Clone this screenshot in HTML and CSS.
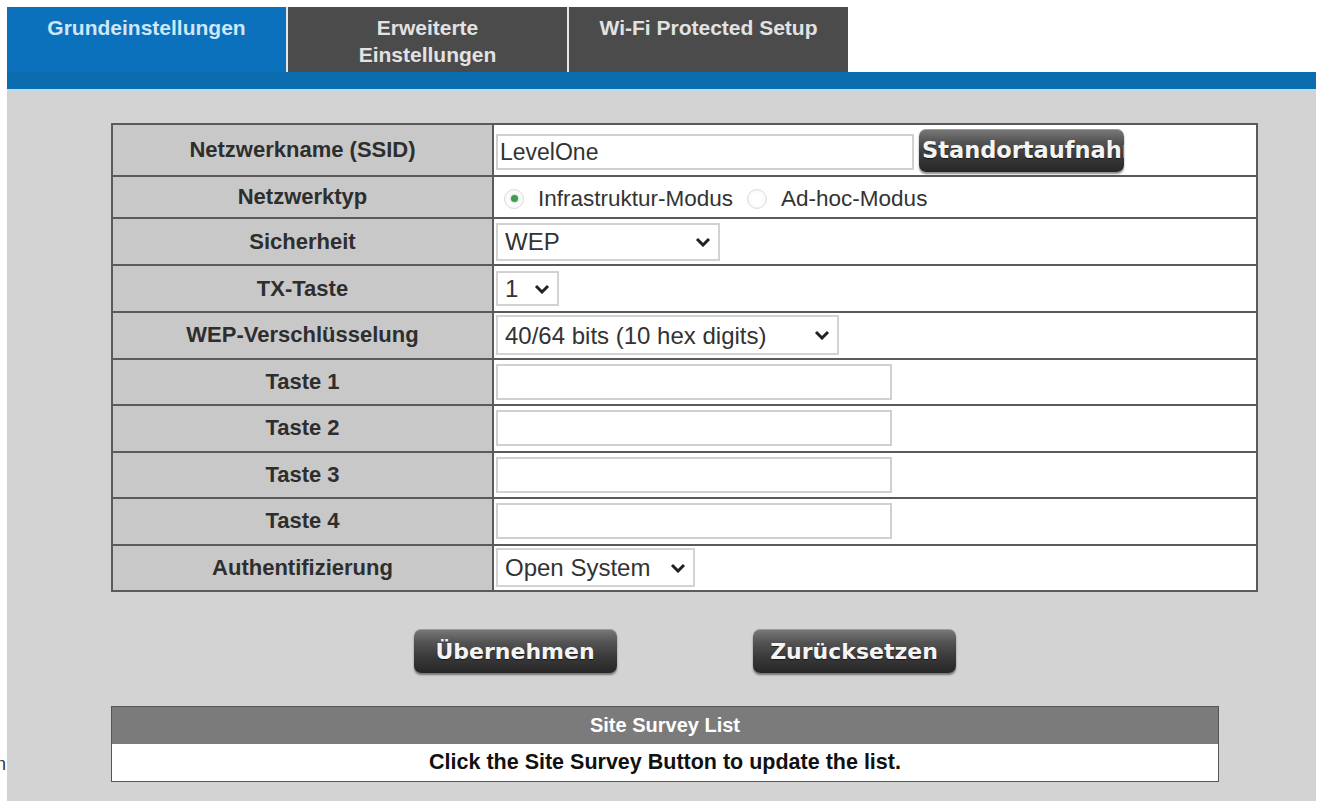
FILE: index.html
```html
<!DOCTYPE html>
<html lang="de">
<head>
    <meta charset="UTF-8">
    <title>Drahtlos - Grundeinstellungen</title>
    <link rel="stylesheet" href="styles.css">
</head>
<body>

    <!-- Left frame edge -->
    <div class="edge"><span>n</span></div>

    <div class="page">
        <!-- Tabs -->
        <nav class="tabs">
            <a href="#" class="tab active">Grundeinstellungen</a>
            <a href="#" class="tab">Erweiterte<br>Einstellungen</a>
            <a href="#" class="tab">Wi-Fi Protected Setup</a>
        </nav>
        <div class="tab-bar"></div>

        <!-- Wireless settings form -->
        <main class="content">
            <table class="settings">
                <tr class="row-ssid">
                    <th>Netzwerkname (SSID)</th>
                    <td>
                        <div class="inline">
                            <input type="text" class="field field-ssid" value="LevelOne">
                            <button class="btn btn-survey">Standortaufnahme</button>
                        </div>
                    </td>
                </tr>
                <tr class="row-type">
                    <th>Netzwerktyp</th>
                    <td>
                        <div class="radios">
                            <label class="radio"><input type="radio" name="mode" checked> Infrastruktur-Modus</label>
                            <label class="radio"><input type="radio" name="mode"> Ad-hoc-Modus</label>
                        </div>
                    </td>
                </tr>
                <tr class="row-tall">
                    <th>Sicherheit</th>
                    <td>
                        <div class="select sel-security">
                            <select><option>WEP</option><option>WPA</option><option>Deaktiviert</option></select>
                            <svg class="chevron" viewBox="0 0 16 10"><polyline points="2,2 8,8 14,2"/></svg>
                        </div>
                    </td>
                </tr>
                <tr class="row-tall">
                    <th>TX-Taste</th>
                    <td>
                        <div class="select sel-tx">
                            <select><option>1</option><option>2</option><option>3</option><option>4</option></select>
                            <svg class="chevron" viewBox="0 0 16 10"><polyline points="2,2 8,8 14,2"/></svg>
                        </div>
                    </td>
                </tr>
                <tr>
                    <th>WEP-Verschlüsselung</th>
                    <td>
                        <div class="select sel-wep">
                            <select><option>40/64 bits (10 hex digits)</option><option>128 bits (26 hex digits)</option></select>
                            <svg class="chevron" viewBox="0 0 16 10"><polyline points="2,2 8,8 14,2"/></svg>
                        </div>
                    </td>
                </tr>
                <tr>
                    <th>Taste 1</th>
                    <td><input type="text" class="field field-key"></td>
                </tr>
                <tr>
                    <th>Taste 2</th>
                    <td><input type="text" class="field field-key"></td>
                </tr>
                <tr>
                    <th>Taste 3</th>
                    <td><input type="text" class="field field-key"></td>
                </tr>
                <tr>
                    <th>Taste 4</th>
                    <td><input type="text" class="field field-key"></td>
                </tr>
                <tr>
                    <th>Authentifizierung</th>
                    <td>
                        <div class="select sel-auth">
                            <select><option>Open System</option><option>Shared Key</option></select>
                            <svg class="chevron" viewBox="0 0 16 10"><polyline points="2,2 8,8 14,2"/></svg>
                        </div>
                    </td>
                </tr>
            </table>

            <div class="actions">
                <button class="btn btn-action">Übernehmen</button>
                <button class="btn btn-action">Zurücksetzen</button>
            </div>

            <!-- Site survey results -->
            <table class="survey">
                <tr><th>Site Survey List</th></tr>
                <tr><td>Click the Site Survey Button to update the list.</td></tr>
            </table>
        </main>
    </div>

</body>
</html>
```

FILE: styles.css
```css
/* Reset */
* {
    margin: 0;
    padding: 0;
    box-sizing: border-box;
}

body {
    font-family: "Liberation Sans", Arial, sans-serif;
    background: #fff;
    display: flex;
    height: 804px;
    overflow: hidden;
}

/* Clipped text from the neighbouring frame */
.edge {
    width: 6px;
    flex-shrink: 0;
    display: flex;
    justify-content: flex-end;
    align-items: flex-start;
    overflow: hidden;
    padding-top: 754px;
    margin-right: 1px;
    font-size: 18px;
    color: #333;
}

.page {
    width: 1309px;
    padding-top: 7px;
}

/* Tabs */
.tabs {
    display: flex;
    height: 65px;
}

.tab {
    width: 281px;
    background: #4b4b4b;
    color: #e2e2e2;
    font-weight: bold;
    font-size: 21px;
    line-height: 27px;
    text-align: center;
    text-decoration: none;
    padding-top: 7px;
    border-right: 2px solid #e6e6e6;
}

.tab:last-child {
    border-right: none;
    width: 279px;
}

.tab.active {
    background: #0b71bd;
    color: #cfe6f6;
}

.tab-bar {
    height: 19px;
    background: #0c6cb0;
    border-bottom: 2px solid #bfdbe7;
}

/* Grey content panel */
.content {
    background: #d3d3d3;
    height: 710px;
    padding: 32px 0 0 104px;
}

/* Settings table */
.settings {
    width: 1147px;
    border-collapse: collapse;
    border: 2px solid #5a5a5a;
}

.settings tr {
    height: 46.5px;
}

.settings tr.row-ssid {
    height: 52px;
}

.settings tr.row-type {
    height: 42px;
}

.settings tr.row-tall {
    height: 47px;
}

.settings th,
.settings td {
    border: 2px solid #5a5a5a;
}

.settings th {
    width: 381px;
    background: #c8c8c8;
    color: #2e2e2e;
    font-size: 22px;
    font-weight: bold;
}

.settings td {
    background: #fff;
    padding: 0 2px;
    color: #333;
}

.inline {
    display: flex;
    align-items: center;
    gap: 5px;
}

/* Text fields */
.field {
    height: 36px;
    border: 2px solid #d0d0d0;
    background: #fff;
    font-family: "Liberation Sans", Arial, sans-serif;
    font-size: 23px;
    color: #333;
    padding: 0 2px;
    outline: none;
}

.field-ssid {
    width: 418px;
    margin-top: 4px;
}

.field-key {
    width: 396px;
    display: block;
}

/* Radio buttons */
.radios {
    display: flex;
    align-items: center;
    gap: 14px;
    padding-left: 8px;
    padding-top: 3px;
}

.radio {
    font-size: 22.5px;
    color: #333;
    display: flex;
    align-items: center;
    gap: 14px;
}

.radio input {
    appearance: none;
    width: 20px;
    height: 20px;
    border-radius: 50%;
    border: 1px solid #dcdcdc;
    background: radial-gradient(circle, #fff 40%, #f0f0f0 100%);
    display: grid;
    place-items: center;
}

.radio input:checked::after {
    content: "";
    width: 7px;
    height: 7px;
    border-radius: 50%;
    background: #3f9b55;
    box-shadow: 0 0 3px #7cc28c;
}

/* Drop-downs */
.select {
    position: relative;
    display: inline-block;
    vertical-align: middle;
}

.select select {
    appearance: none;
    display: block;
    height: 38px;
    border: 2px solid #d2d2d2;
    background: #fff;
    font-family: "Liberation Sans", Arial, sans-serif;
    font-size: 24px;
    color: #333;
    padding: 0 0 0 7px;
    outline: none;
}

.sel-security select { width: 224px; }
.sel-tx select { width: 63px; height: 35px; }
.sel-wep select { width: 343px; height: 40px; }
.sel-auth select { width: 199px; height: 39px; }

.chevron {
    position: absolute;
    right: 9px;
    top: 50%;
    width: 16px;
    height: 10px;
    margin-top: -5px;
    fill: none;
    stroke: #222;
    stroke-width: 3;
    pointer-events: none;
}

/* Dark glossy buttons */
.btn {
    border: none;
    border-radius: 7px;
    background: linear-gradient(#7a7a7a 0%, #545454 30%, #3c3c3c 60%, #262626 100%);
    box-shadow: 0 2px 2px rgba(0, 0, 0, 0.45), inset 0 1px 0 rgba(255, 255, 255, 0.25);
    color: #f4f4f4;
    font-family: "DejaVu Sans", Verdana, sans-serif;
    font-weight: bold;
    font-size: 22px;
    text-shadow: 0 1px 1px rgba(0, 0, 0, 0.6);
    cursor: pointer;
}

.btn-survey {
    width: 205px;
    height: 43px;
    overflow: hidden;
    white-space: nowrap;
    text-align: left;
    padding-left: 3px;
    font-size: 22.5px;
}

.actions {
    width: 1147px;
    display: flex;
    justify-content: center;
    gap: 136px;
    margin-top: 37px;
}

.btn-action {
    width: 203px;
    height: 44px;
}

/* Site survey list */
.survey {
    width: 1108px;
    margin-top: 33px;
    border-collapse: collapse;
    border: 1px solid #555;
    text-align: center;
    font-weight: bold;
}

.survey th {
    height: 37px;
    background: #7b7b7b;
    color: #fff;
    font-size: 20px;
}

.survey td {
    height: 38px;
    background: #fff;
    color: #111;
    font-size: 21.5px;
}
```
